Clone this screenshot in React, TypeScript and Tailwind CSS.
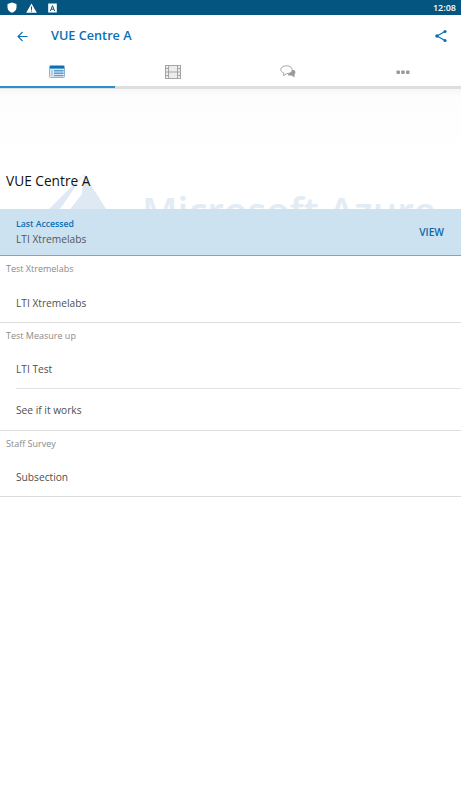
const font = { fontFamily: '"Open Sans", sans-serif' };

function Row({ label, divider }: { label: string; divider?: boolean }) {
  return (
    <div className="pl-4">
      <div className={`flex items-center pt-[3px] text-[10.2px] text-[#4f4f4f] ${divider ? "h-[40px] border-b border-[#e2e2e2]" : "h-[40px]"}`}>{label}</div>
    </div>
  );
}

function Section({ title, rows, short, tall }: { title: string; rows: string[]; short?: boolean; tall?: boolean }) {
  return (
    <section className={`border-b border-[#dcdcdc] ${tall ? "pb-[1px]" : ""}`}>
      <div className={`pl-[6px] flex items-center text-[9px] text-[#8a8a8a] ${short ? "h-[25px]" : "h-[26px]"}`}>{title}</div>
      {rows.map((r, i) => (
        <Row key={r} label={r} divider={i < rows.length - 1} />
      ))}
    </section>
  );
}

export default function App() {
  return (
    <div className="w-[461px] h-[800px] bg-white overflow-hidden" style={font}>
      <div className="h-[15px] bg-[#04557f] flex items-center justify-between pl-[7px] pr-[5px] text-white">
        <div className="flex items-center gap-[9px]">
          <svg width="10" height="11" viewBox="0 0 10 11"><path d="M5 0.5 L9.5 2 V5.5 C9.5 8 7.5 9.8 5 10.8 C2.5 9.8 0.5 8 0.5 5.5 V2 Z" fill="#fff" /></svg>
          <svg width="11" height="10" viewBox="0 0 11 10"><path d="M5.5 0.5 L10.8 9.8 H0.2 Z" fill="#fff" /><rect x="5" y="3.5" width="1" height="3.4" fill="#04557f" /><rect x="5" y="7.6" width="1" height="1" fill="#04557f" /></svg>
          <svg className="ml-[2px]" width="9" height="10" viewBox="0 0 9 10"><rect x="0.2" y="0.5" width="8.6" height="9" fill="#fff" /><path d="M2.4 8 L4.5 2.6 L6.6 8 M3.2 6.2 H5.8" stroke="#04557f" strokeWidth="1" fill="none" /></svg>
        </div>
        <span className="text-[9px] font-semibold">12:08</span>
      </div>

      <header className="h-[42px] flex items-center pl-[17px] pr-[14px]">
        <svg width="11" height="11" viewBox="0 0 11 11" fill="none" stroke="#0a70b4" strokeWidth="1.1"><path d="M10.5 5.5 H1 M5.5 1 L1 5.5 L5.5 10" /></svg>
        <h1 className="ml-[23px] text-[12.7px] font-semibold text-[#0a70b4]">VUE Centre A</h1>
        <svg className="ml-auto" width="12" height="14" viewBox="0 0 12 14" fill="#0a70b4" stroke="#0a70b4"><path d="M10 2.5 L2 7 L10 11.5" fill="none" strokeWidth="1.2" /><circle cx="10" cy="2.5" r="1.6" strokeWidth="0" /><circle cx="2" cy="7" r="1.8" strokeWidth="0" /><circle cx="10" cy="11.5" r="1.6" strokeWidth="0" /></svg>
      </header>

      <nav className="h-[32px] grid grid-cols-4 border-b-[3px] border-[#dedede] relative z-10">
        <div className="flex items-center justify-center border-b-2 border-[#2a8fcf] -mb-[2px] pr-[1px]">
          <svg width="16" height="13" viewBox="0 0 16 13"><rect x="0.5" y="0.5" width="15" height="12" rx="1" fill="#dbe8f3" stroke="#8cb3d3" /><rect x="1" y="1" width="14" height="2.6" fill="#0a70b4" /><rect x="5" y="5" width="9.5" height="1.5" fill="#5f9ccb" /><rect x="5" y="7.5" width="9.5" height="1.5" fill="#5f9ccb" /><rect x="5" y="10" width="9.5" height="1.2" fill="#5f9ccb" /><rect x="2" y="5" width="2" height="6" fill="#b6cfe4" /></svg>
        </div>
        <div className="flex items-center justify-center">
          <svg width="16" height="14" viewBox="0 0 16 14" fill="none" stroke="#a5a5a5"><rect x="0.5" y="0.5" width="15" height="13" fill="#ececec" /><path d="M3.5 0.5 V13.5 M12.5 0.5 V13.5 M3.5 7 H12.5 M0.5 3.5 H3.5 M0.5 7 H3.5 M0.5 10.5 H3.5 M12.5 3.5 H15.5 M12.5 7 H15.5 M12.5 10.5 H15.5" /></svg>
        </div>
        <div className="flex items-center justify-center">
          <svg width="16" height="14" viewBox="0 0 16 14"><path d="M9 5 H14 C15.5 5.5 16 8 14.5 9.5 L14.5 12.5 L11.5 10.5 H8 Z" fill="#9a9a9a" /><path d="M6.5 0.8 C10 0.8 12.2 2.5 12.2 4.8 C12.2 7 10 8.7 6.5 8.7 L3.6 10.7 L3.8 8 C1.8 7.2 0.7 6 0.7 4.8 C0.7 2.5 3 0.8 6.5 0.8 Z" fill="#fff" stroke="#a5a5a5" /></svg>
        </div>
        <div className="flex items-center justify-center">
          <svg width="14" height="4" viewBox="0 0 14 4" fill="#9a9a9a"><rect x="0.5" y="0.5" width="3.5" height="3.5" rx="0.8" /><rect x="5.2" y="0.5" width="3.5" height="3.5" rx="0.8" /><rect x="10" y="0.5" width="3.5" height="3.5" rx="0.8" /></svg>
        </div>
      </nav>

      <div className="relative h-[120px] overflow-hidden bg-gradient-to-b from-[#f6f6f6] via-[#fdfdfd] via-[6%] to-white to-[60%]">
        <svg className="absolute left-[46px] top-[83px]" width="62" height="40" viewBox="0 0 62 40" fill="#dfe9f3"><path d="M38 2 L12 40 H0 Z M38 2 L62 40 H22 L36 22 Z" /></svg>
        <span className="absolute left-[142px] top-[99px] text-[38.5px] leading-[44px] font-semibold text-[#e3ecf4] whitespace-nowrap">Microsoft Azure</span>
        <h2 className="absolute left-[6px] top-[82px] text-[13.7px] leading-[20px] text-[#111]">VUE Centre A</h2>
      </div>

      <div className="h-[47px] bg-[#cce2f0] border-b border-[#7fa6c9] flex items-center justify-between pl-4 pr-[17px] relative">
        <div>
          <div className="text-[8.7px] leading-[14px] font-semibold text-[#0a70b4]">Last Accessed</div>
          <div className="text-[10.2px] leading-[16px] text-[#555]">LTI Xtremelabs</div>
        </div>
        <span className="pt-[2px] text-[10.2px] font-semibold text-[#0a6aa8]">VIEW</span>
      </div>

      <Section title="Test Xtremelabs" rows={["LTI Xtremelabs"]} />
      <Section title="Test Measure up" rows={["LTI Test", "See if it works"]} tall />
      <Section title="Staff Survey" rows={["Subsection"]} short />
    </div>
  );
}
